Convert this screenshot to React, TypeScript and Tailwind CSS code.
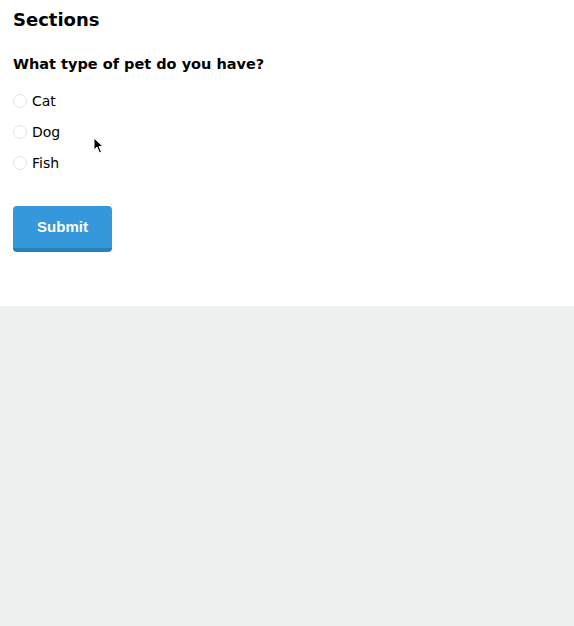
export default function App() {
  const pets = ['Cat', 'Dog', 'Fish']

  return (
    <div className="w-[574px] h-[626px] flex flex-col bg-[#eef0ef]" style={{ fontFamily: '"DejaVu Sans", sans-serif' }}>
      <div className="relative h-[306px] bg-white px-[13px] pt-[8px]">
        <h1 className="text-[18px] leading-[24px] font-bold text-black">Sections</h1>
        <h2 className="mt-[22px] text-[14.5px] leading-[20px] font-bold text-black">What type of pet do you have?</h2>

        <div className="mt-[18px] flex flex-col gap-[13px]">
          {pets.map((p) => (
            <label key={p} className="flex items-center gap-[5px] h-[18px] text-[14px] text-black">
              <span className="w-[14px] h-[14px] rounded-full border border-[#e4e4e4] bg-white" />
              {p}
            </label>
          ))}
        </div>

        <button
          className="mt-[34px] w-[99px] h-[46px] rounded-[4px] bg-[#3498db] border-b-4 border-[#2a80b9] text-white text-[15px] font-bold"
          style={{ fontFamily: '"Liberation Sans", Arial, sans-serif' }}
        >
          Submit
        </button>

        {/* mouse pointer */}
        <svg className="absolute left-[93px] top-[137px]" width="12" height="18" viewBox="0 0 12 18">
          <path d="M1 1 L1 13 L4 10 L6.5 16 L8.5 15 L6 9.5 L10 9.5 Z" fill="#000" stroke="#fff" strokeWidth="1" />
        </svg>
      </div>
    </div>
  )
}
